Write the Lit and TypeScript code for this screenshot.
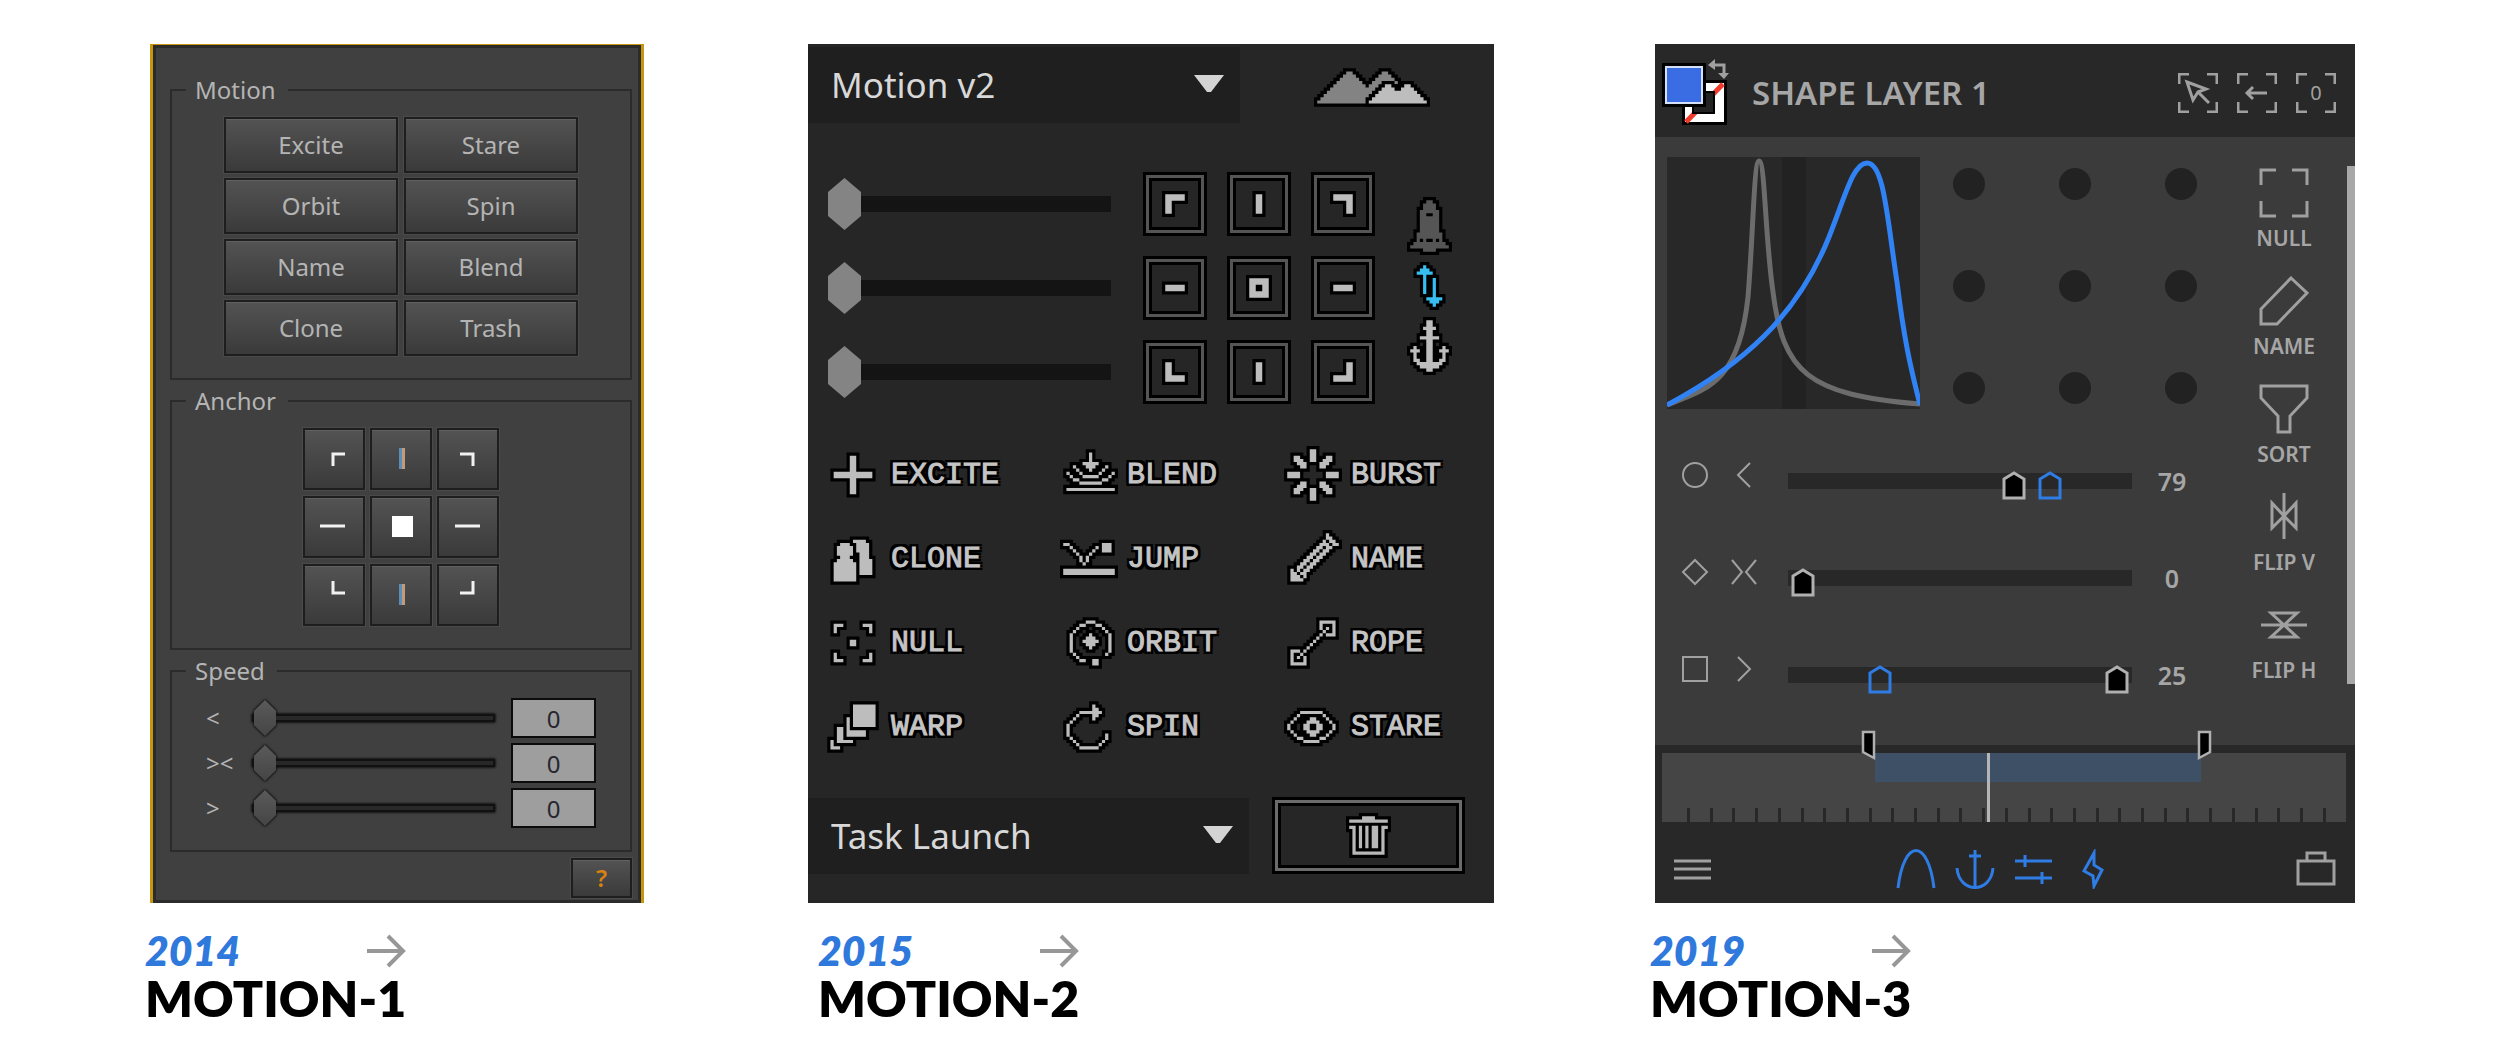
import { LitElement, html, svg, css, nothing } from "lit";
import { customElement } from "lit/decorators.js";

/* ---------- Pixel sprites: space separated "x,y[,w[,h]]" cells ---------- */

interface Layer {
  cells: string;
  fill: string;
}

const parse = (cells: string) =>
  cells.split(" ").map((c) => {
    const [x, y, w = 1, h = 1] = c.split(",").map(Number);
    return { x, y, w, h };
  });

const toPath = (cells: string, grow = 0) =>
  parse(cells)
    .map(({ x, y, w, h }) => `M${x - grow},${y - grow}h${w + 2 * grow}v${h + 2 * grow}h${-w - 2 * grow}z`)
    .join("");

const sprite = (cls: string, cols: number, rows: number, layers: Layer[], holes = "") => html`
  <svg class="sprite ${cls}" viewBox="0 0 ${cols} ${rows}" aria-hidden="true">
    ${layers.map(
      (l) => svg`<path d=${toPath(l.cells, 1)} fill="#000"/><path d=${toPath(l.cells)} fill=${l.fill}/>`
    )}
    ${holes ? svg`<path d=${toPath(holes)} fill="#000"/>` : nothing}
  </svg>
`;

const LIGHT = "#bdbdbd";

const TOOLS: { name: string; cells: string }[] = [
  { name: "EXCITE", cells: "8,3,2,12 3,8,12,2" },
  {
    name: "BLEND",
    cells:
      "9,2,1,3 7,5,5 8,6,3 9,7 4,6 5,7 6,8 7,9,5 12,8 13,7 14,6 2,8 3,9 4,10,2 6,11,7 13,10,2 15,9 16,8 2,13,15",
  },
  {
    name: "BURST",
    cells:
      "8,1,2,4 8,13,2,4 1,8,4,2 13,8,4,2 3,3,2 3,4,3 4,5,3 5,6,2 13,3,2 12,4,3 11,5,3 11,6,2 3,14,2 3,13,3 4,12,3 5,11,2 13,14,2 12,13,3 11,12,3 11,11,2",
  },
  { name: "CLONE", cells: "9,3,4 10,4,4,3 11,7,3,2 11,9,4,5 5,4,3 4,5,5,3 5,8,3 4,9,5 3,10,7,6" },
  { name: "JUMP", cells: "1,4,2 3,5 4,6 5,7 6,8,1,2 7,10 8,8,1,2 9,7 10,6 11,5 13,4,3,3 1,12,16,2" },
  {
    name: "NAME",
    cells:
      "13,1 13,2,2 14,3,2 15,4,2 12,3 11,4,3 10,5,2 13,5,2 9,6,2 12,6,2 8,7,2 11,7,2 7,8,2 10,8,2 6,9,2 9,9,2 5,10,2 8,10,2 4,11,2 7,11,2 4,12,1 6,12,2 5,13,2 6,14 2,12 2,13,2 2,14,3 2,15,4",
  },
  { name: "NULL", cells: "3,3,3 3,3,1,3 12,3,3 14,3,1,3 3,14,3 3,12,1,3 12,14,3 14,12,1,3 8,8,2,2" },
  {
    name: "ORBIT",
    cells:
      "9,6,1,5 8,7,3,3 7,8,5 8,2,3 6,3,2 11,3,2 5,4 13,4 4,5 14,5 3,6,1,6 15,6,1,6 4,12 5,13 6,14,2 14,12 10,14,2,2",
  },
  {
    name: "ROPE",
    cells:
      "11,2,5 15,2,1,5 13,6,3 11,2,1,3 13,4 12,5 11,6 10,7 9,8 8,9 7,10 6,11 5,12 4,13 2,11,3 2,11,1,5 2,15,5 6,13,1,3",
  },
  { name: "WARP", cells: "9,2,7,7 7,6,1,6 7,10,6,2 4,9,2,5 4,13,5 2,13,1,3 2,15,3" },
  {
    name: "SPIN",
    cells: "2,8,1,4 3,12 4,13 5,14 6,15,6 12,14 13,13 14,11,1,2 3,7 4,6 5,5 6,4,4 10,2,1,5 11,3,1,3 12,4",
  },
  {
    name: "STARE",
    cells:
      "5,4,7 4,5 12,5 3,6 13,6 2,7 14,7 1,8,1,2 15,8,1,2 2,10 14,10 3,11 13,11 4,12,2 11,12,2 6,13,5 8,6,2 7,7,4 6,8,2,2 10,8,2,2 7,10,4 8,11,2",
  },
];

const TILES: { name: string; cells: string }[] = [
  { name: "Top left", cells: "1,1,6,2 1,1,2,6" },
  { name: "Top", cells: "3,1,2,6" },
  { name: "Top right", cells: "1,1,6,2 5,1,2,6" },
  { name: "Left", cells: "1,3,6,2" },
  { name: "Center", cells: "1,1,6,2 1,5,6,2 1,3,2,2 5,3,2,2" },
  { name: "Right", cells: "1,3,6,2" },
  { name: "Bottom left", cells: "1,1,2,6 1,5,6,2" },
  { name: "Bottom", cells: "3,1,2,6" },
  { name: "Bottom right", cells: "5,1,2,6 1,5,6,2" },
];

const MOUNTAINS: Layer[] = [
  {
    fill: "#838383",
    cells:
      "10,1,2 21,1,2 9,2,4 20,2,4 8,3,6 19,3,6 7,4,8 18,4,8 6,5,10 17,5,5 5,6,16 4,7,16 3,8,16 2,9,16 1,10,16",
  },
  { fill: LIGHT, cells: "22,5,2 28,5,2 21,6,4 27,6,4 20,7,12 19,8,14 18,9,16 17,10,18" },
];

const ROCKET = "6,1,2 5,2,4,2 4,4,6,7 3,11,8,3 2,14,10 1,15,12 5,16,4";
const SWAP = "5,1 4,2,3 3,3,5 5,4,1,6 8,5,1,6 6,11,5 7,12,3 8,13";
const ANCHOR =
  "6,1,2,16 5,3,4 4,6,6 2,9,1,5 11,9,1,5 1,10,3 10,10,3 2,13,2 10,13,2 3,14,8 4,15,6";
const TRASH =
  "5,1,4 1,2,12 1,4,2 11,4,2 2,4,1,9 11,4,1,9 2,12,10 4,4,1,7 6,4,1,7 8,4,2,7";

const sharedStyles = css`
  :host {
    display: block;
  }
  * {
    box-sizing: border-box;
  }
  button,
  input,
  select {
    font: inherit;
    color: inherit;
    margin: 0;
    padding: 0;
    border: 0;
    border-radius: 0;
    background: none;
  }
  svg {
    display: block;
    flex: none;
  }
  input[type="range"] {
    appearance: none;
    -webkit-appearance: none;
    display: block;
    width: 100%;
    min-width: 0;
  }
`;

/* ------------------------------ Motion 1 ------------------------------ */

@customElement("motion-one")
export class MotionOne extends LitElement {
  static styles = [
    sharedStyles,
    css`
      .panel {
        height: 100%;
        padding: 30px 9px 4px 17px;
        background: #404040;
        border: 3px solid #c6960f;
        border-width: 1px 3px 0;
        box-shadow: inset 0 0 0 3px #2b2b2b;
        font: 24px/30px "Noto Sans", sans-serif;
        color: #b4b4b4;
        display: flex;
        flex-direction: column;
        gap: 6px;
      }
      .group {
        min-width: 0;
        margin: 0;
        padding: 12px 34px 22px;
        border: 2px solid #2b2b2b;
      }
      .legend {
        margin-left: -20px;
        padding: 0 12px 0 9px;
      }
      .actions {
        display: grid;
        grid-template-columns: 174px 174px;
        grid-auto-rows: 56px;
        gap: 5px 6px;
        justify-content: center;
      }
      .anchors {
        display: grid;
        grid-template-columns: repeat(3, 62px);
        grid-auto-rows: 62px;
        gap: 6px 5px;
        justify-content: center;
      }
      .key {
        display: grid;
        place-items: center;
        border: 2px solid #1e1e1e;
        background: linear-gradient(#535353, #3a3a3a);
        box-shadow: 0 0 0 1px #4a4a4a, inset 0 1px 0 #606060;
      }
      .speeds {
        display: grid;
        grid-template-columns: 46px 1fr 85px;
        grid-auto-rows: 40px;
        row-gap: 5px;
        align-items: center;
      }
      .slider {
        height: 40px;
        padding-right: 16px;
        filter: drop-shadow(0 0 1px #111) drop-shadow(0 0 1px #111);
      }
      .slider::-webkit-slider-runnable-track {
        height: 8px;
        background: #282828;
        border: 2px solid #111;
      }
      .slider::-webkit-slider-thumb {
        -webkit-appearance: none;
        width: 22px;
        height: 36px;
        margin-top: -16px;
        background: linear-gradient(#5a5a5a, #454545);
        clip-path: polygon(50% 0, 100% 30%, 100% 70%, 50% 100%, 0 70%, 0 30%);
      }
      .value {
        width: 100%;
        height: 40px;
        border: 2px solid #0c0c0c;
        background: #9e9e9e;
        color: #26262e;
        text-align: center;
      }
      .help {
        align-self: flex-end;
        width: 61px;
        height: 40px;
        color: #d9820f;
        font-weight: 600;
      }
    `,
  ];

  private glyphs: [string, string][] = [
    ["Top left", "M29,37V25H41"],
    ["Top", "|"],
    ["Top right", "M22,25H35V37"],
    ["Left", "M16,29H41"],
    ["Center", "#"],
    ["Right", "M17,29H42"],
    ["Bottom left", "M29,16V28H41"],
    ["Bottom", "|"],
    ["Bottom right", "M22,28H35V16"],
  ];

  private glyph(shape: string) {
    if (shape === "|")
      return svg`<path d="M28,19h3v21h-3z" fill="#5b8db8"/><path d="M31,19h3v21h-3z" fill="#c39b78"/>`;
    if (shape === "#") return svg`<path d="M21,19h21v21h-21z" fill="#fff"/>`;
    return svg`<path d=${shape} fill="none" stroke="#f2f2f2" stroke-width="3"/>`;
  }

  render() {
    return html`
      <div class="panel">
        <fieldset class="group">
          <legend class="legend">Motion</legend>
          <div class="actions">
            ${["Excite", "Stare", "Orbit", "Spin", "Name", "Blend", "Clone", "Trash"].map(
              (n) => html`<button class="key">${n}</button>`
            )}
          </div>
        </fieldset>
        <fieldset class="group">
          <legend class="legend">Anchor</legend>
          <div class="anchors">
            ${this.glyphs.map(
              ([n, s]) => html`<button class="key" aria-label=${n}>
                <svg width="58" height="58" viewBox="1 1 58 58">${this.glyph(s)}</svg>
              </button>`
            )}
          </div>
        </fieldset>
        <fieldset class="group">
          <legend class="legend">Speed</legend>
          <div class="speeds">
            ${["<", "><", ">"].map(
              (n, i) => html`
                <label for="speed-${i}">${n}</label>
                <input class="slider" id="speed-${i}" type="range" min="0" max="100" .value=${"0"} />
                <input class="value" type="text" aria-label="${n} value" .value=${"0"} />
              `
            )}
          </div>
        </fieldset>
        <button class="key help">?</button>
      </div>
    `;
  }
}

/* ------------------------------ Motion 2 ------------------------------ */

@customElement("motion-two")
export class MotionTwo extends LitElement {
  static styles = [
    sharedStyles,
    css`
      .panel {
        height: 100%;
        padding: 3px 0 29px;
        background: #262626;
        color: #d8d8d8;
      }
      .head {
        display: grid;
        grid-template-columns: 432fr 254fr;
        align-items: center;
      }
      .brand {
        display: flex;
        justify-content: center;
        padding: 4px 0 0 10px;
      }
      .mountains {
        width: 116px;
        height: 39px;
      }
      .drop {
        position: relative;
        height: 76px;
        background: #1f1f1f;
      }
      .select {
        appearance: none;
        -webkit-appearance: none;
        width: 100%;
        height: 100%;
        padding-left: 23px;
        font: 35px/44px "Noto Sans", sans-serif;
      }
      .caret {
        position: absolute;
        right: 16px;
        top: 28px;
        pointer-events: none;
      }
      .controls {
        display: grid;
        grid-template-columns: 1fr 232px 45px;
        column-gap: 32px;
        margin-top: 49px;
        padding: 0 42px 0 20px;
      }
      .sliders {
        display: grid;
        grid-auto-rows: 64px;
        row-gap: 20px;
        align-items: center;
      }
      .slider {
        height: 52px;
      }
      .slider::-webkit-slider-runnable-track {
        height: 16px;
        background: #141414;
      }
      .slider::-webkit-slider-thumb {
        -webkit-appearance: none;
        width: 33px;
        height: 52px;
        margin-top: -18px;
        background: #848484;
        clip-path: polygon(50% 0, 100% 27%, 100% 73%, 50% 100%, 0 73%, 0 27%);
      }
      .tiles {
        display: grid;
        grid-template-columns: repeat(3, 64px);
        grid-auto-rows: 64px;
        gap: 20px;
      }
      .tile {
        display: grid;
        place-items: center;
        border: 3px solid #000;
        box-shadow: inset 0 0 0 3px #555, inset 0 0 0 6px #000;
      }
      .modes {
        display: flex;
        flex-direction: column;
        gap: 7px;
        padding-top: 25px;
      }
      .tall {
        width: 45px;
        height: 58px;
      }
      .short {
        width: 45px;
        height: 48px;
      }
      .dot {
        width: 26px;
        height: 26px;
      }
      .tools {
        display: grid;
        grid-template-columns: 236fr 224fr 210fr;
        row-gap: 26px;
        margin: 42px 0 41px;
        padding-left: 16px;
      }
      .tool {
        display: flex;
        align-items: center;
        gap: 9px;
        font: 30px/34px "Liberation Mono", monospace;
        color: #c4c4c4;
        -webkit-text-stroke: 1px #c4c4c4;
        text-shadow: 3px 0 #000, -3px 0 #000, 0 3px #000, 0 -3px #000, 3px 3px #000, -3px -3px #000,
          3px -3px #000, -3px 3px #000, 0 0 2px #000;
      }
      .icon {
        width: 58px;
        height: 58px;
      }
      .foot {
        display: flex;
        align-items: center;
        gap: 23px;
        padding-right: 29px;
      }
      .foot .drop {
        flex: 1;
      }
      .trash {
        width: 193px;
        height: 77px;
        box-shadow: inset 0 0 0 3px #6b6b6b, inset 0 0 0 6px #000;
      }
      .bin {
        width: 45px;
        height: 45px;
      }
    `,
  ];

  private drop(id: string, label: string, text: string) {
    return html`
      <div class="drop">
        <select class="select" id=${id} aria-label=${label}>
          <option>${text}</option>
        </select>
        <svg class="caret" width="30" height="17" viewBox="0 0 30 17">
          <path d="M0,0H30L17,17H13z" fill="#d4d4d4" />
        </svg>
      </div>
    `;
  }

  render() {
    return html`
      <div class="panel">
        <div class="head">
          ${this.drop("script", "Script", "Motion v2")}
          <div class="brand">${sprite("mountains", 36, 12, MOUNTAINS)}</div>
        </div>
        <div class="controls">
          <div class="sliders">
            ${["Ease in", "Ease both", "Ease out"].map(
              (n) =>
                html`<input class="slider" type="range" aria-label=${n} min="0" max="100" .value=${"0"} />`
            )}
          </div>
          <div class="tiles">
            ${TILES.map(
              (t) => html`<button class="tile" aria-label=${t.name}>
                ${sprite("dot", 8, 8, [{ cells: t.cells, fill: LIGHT }])}
              </button>`
            )}
          </div>
          <div class="modes">
            <button aria-label="Launch">
              ${sprite("tall", 14, 18, [{ cells: ROCKET, fill: "#555" }], "6,5,2 4,13 6,13,2 9,13")}
            </button>
            <button aria-label="Swap">${sprite("short", 14, 15, [{ cells: SWAP, fill: "#38bdf0" }])}</button>
            <button aria-label="Anchor">${sprite("tall", 14, 18, [{ cells: ANCHOR, fill: LIGHT }])}</button>
          </div>
        </div>
        <div class="tools">
          ${TOOLS.map(
            (t) => html`<button class="tool">
              ${sprite("icon", 18, 18, [{ cells: t.cells, fill: LIGHT }])}<span>${t.name}</span>
            </button>`
          )}
        </div>
        <div class="foot">
          ${this.drop("task", "Task", "Task Launch")}
          <button class="tile trash" aria-label="Trash">
            ${sprite("bin", 14, 14, [{ cells: TRASH, fill: "#b8b8b8" }])}
          </button>
        </div>
      </div>
    `;
  }
}

/* ------------------------------ Motion 3 ------------------------------ */

interface Ease {
  name: string;
  shape: string;
  chevron: string;
  value: number;
  handles: { at: number; active: boolean }[];
}

@customElement("motion-three")
export class MotionThree extends LitElement {
  static styles = [
    sharedStyles,
    css`
      .panel {
        height: 100%;
        background: #282828;
        color: #a6a6a6;
        font: 600 21px/28px "Noto Sans", sans-serif;
        display: flex;
        flex-direction: column;
      }
      .line {
        fill: none;
        stroke: #a0a0a0;
        stroke-width: 3;
      }
      .thin {
        stroke-width: 2;
      }
      .blue {
        stroke: #2f7ce4;
      }
      .head {
        display: flex;
        align-items: center;
        gap: 19px;
        height: 93px;
        padding: 0 19px 0 7px;
      }
      .title {
        flex: 1;
        margin: 0;
        padding: 4px 0 0 3px;
        font: 600 33px/40px "Noto Sans", sans-serif;
      }
      .head button {
        padding-top: 4px;
      }
      .glyph {
        fill: #a0a0a0;
        font: 20px "Noto Sans", sans-serif;
      }
      .body {
        flex: 1;
        display: flex;
        background: #3b3b3b;
      }
      .main {
        flex: 1;
        padding-top: 20px;
      }
      .top {
        display: flex;
        gap: 33px;
        padding-left: 12px;
      }
      .dots {
        display: grid;
        grid-template-columns: repeat(3, 32px);
        grid-auto-rows: 32px;
        gap: 70px 74px;
        padding-top: 11px;
      }
      .dot {
        border-radius: 50%;
        background: #222;
      }
      .ease {
        display: grid;
        grid-template-columns: 28px 28px 1fr 60px;
        align-items: center;
        height: 97px;
        padding: 0 32px 0 26px;
      }
      .eases {
        padding-top: 23px;
      }
      .mark {
        padding-bottom: 12px;
      }
      .mark + .mark {
        padding-left: 21px;
      }
      .track {
        position: relative;
        height: 16px;
        margin: 0 10px 0 51px;
        background: #282828;
      }
      .range {
        position: absolute;
        inset: 0;
        height: 16px;
        opacity: 0;
      }
      .handle {
        position: absolute;
        top: -3px;
      }
      .value {
        font: 600 25px/32px "Noto Sans", sans-serif;
        text-align: center;
      }
      .tools {
        width: 100px;
        display: flex;
        flex-direction: column;
        gap: 24px;
        padding-top: 31px;
      }
      .tool {
        display: flex;
        flex-direction: column;
        align-items: center;
        gap: 6px;
      }
      .scroll {
        width: 8px;
        margin: 29px 0 61px 13px;
        background: #a8a8a8;
      }
      .time {
        position: relative;
        width: 100%;
        height: auto;
        margin-top: -15px;
      }
      .foot {
        display: flex;
        justify-content: space-between;
        padding: 27px 19px 14px 18px;
      }
      .tabs {
        display: flex;
        gap: 19px;
      }
    `,
  ];

  private eases: Ease[] = [
    {
      name: "Ease in",
      shape: "M14,2a12,12 0 1 1 0,24a12,12 0 1 1 0,-24z",
      chevron: "M20,2L8,14L20,26",
      value: 79,
      handles: [
        { at: 67, active: false },
        { at: 78, active: true },
      ],
    },
    {
      name: "Ease both",
      shape: "M14,2L26,14L14,26L2,14z",
      chevron: "M2,2L12,14L2,26M26,2L16,14L26,26",
      value: 0,
      handles: [{ at: 1, active: false }],
    },
    {
      name: "Ease out",
      shape: "M2,2H26V26H2z",
      chevron: "M8,2L20,14L8,26",
      value: 25,
      handles: [
        { at: 25, active: true },
        { at: 99, active: false },
      ],
    },
  ];

  private tools = [
    { name: "NULL", d: "M2,17V2H17M33,2H48V17M2,33V48H17M33,48H48V33" },
    { name: "NAME", d: "M32,2L48,17L18,48H2V33z" },
    { name: "SORT", d: "M2,2H48V14L31,32V48H19V32L2,14z" },
    { name: "FLIP V", d: "M25,1V47M13,11L25,24L13,36zM37,11L25,24L37,36z" },
    { name: "FLIP H", d: "M2,25H48M12,13H38L25,25zM12,37H38L25,25z" },
  ];

  private frame = "M1,11V1H11M29,1H39V11M1,29V39H11M29,39H39V29";

  private icon(size: number, d: string, cls = "line") {
    return html`<svg width=${size} height=${size} viewBox="0 0 ${size} ${size}"><path class=${cls} d=${d} /></svg>`;
  }

  private easeRow(e: Ease, i: number) {
    return html`
      <div class="ease">
        <span class="mark">${this.icon(28, e.shape, "line thin")}</span>
        <span class="mark">${this.icon(28, e.chevron, "line thin")}</span>
        <div class="track">
          ${e.handles.map(
            (h) => html`<svg class="handle" style="left: calc((100% - 24px) * ${h.at / 100})" width="24" height="30">
              <path
                d="M2,9L12,3L22,9V28H2z"
                fill=${h.active ? "none" : "#000"}
                stroke=${h.active ? "#2f7ce4" : "#b0b0b0"}
                stroke-width="3"
              />
            </svg>`
          )}
          <input class="range" id="ease-${i}" type="range" min="0" max="100" aria-label=${e.name} .value=${String(e.value)} />
        </div>
        <output class="value" for="ease-${i}">${e.value}</output>
      </div>
    `;
  }

  render() {
    const ticks = Array.from({ length: 29 }, (_, i) => 32 + Math.round(i * 22.7));
    return html`
      <div class="panel">
        <header class="head">
          <svg width="68" height="68" viewBox="0 0 68 68">
            <rect x="20" y="23" width="45" height="45" fill="#000" />
            <rect x="23" y="26" width="39" height="39" fill="#fff" />
            <path d="M24,65L61,27" stroke="#f03a2c" stroke-width="5" />
            <rect x="31" y="35" width="21" height="21" fill="#222" stroke="#000" stroke-width="2" />
            <rect x="0" y="6" width="44" height="44" fill="#000" />
            <rect x="3" y="9" width="38" height="38" fill="#d5dff5" />
            <rect x="5" y="11" width="34" height="34" fill="#3a6de4" />
            <path class="line" d="M49,8H62V19" />
            <path d="M46,8L53,2V13zM62,22L56,16H67z" fill="#a0a0a0" />
          </svg>
          <h2 class="title">SHAPE LAYER 1</h2>
          <button aria-label="Select">${this.icon(40, this.frame + "M9,9L28,16L20,19L15,27zM19,18L31,30")}</button>
          <button aria-label="Back">${this.icon(40, this.frame + "M30,20H11M16,14L10,20L16,26")}</button>
          <button aria-label="Zero">
            <svg width="40" height="40" viewBox="0 0 40 40">
              <path class="line" d=${this.frame} />
              <text class="glyph" x="20" y="27" text-anchor="middle">0</text>
            </svg>
          </button>
        </header>
        <div class="body">
          <div class="main">
            <div class="top">
              <svg width="253" height="252" viewBox="0 0 253 252">
                <rect width="253" height="252" fill="#282828" />
                <rect x="115" width="24" height="252" fill="#222" />
                <g fill="none" stroke-width="5">
                  <path
                    d="M0,248C40,232 72,226 81,140C86,80 87,4 92,4C98,4 98,80 106,135C116,215 140,238 253,247"
                    stroke="#6c6c6c"
                  />
                  <path
                    d="M0,248C75,208 130,160 162,80C178,40 186,6 200,6C217,6 220,60 230,125C238,190 245,215 253,248"
                    stroke="#3183f5"
                  />
                </g>
              </svg>
              <div class="dots">
                ${TILES.map((t) => html`<button class="dot" aria-label=${t.name}></button>`)}
              </div>
            </div>
            <div class="eases">${this.eases.map((e, i) => this.easeRow(e, i))}</div>
          </div>
          <div class="tools">
            ${this.tools.map(
              (t) => html`<button class="tool">${this.icon(50, t.d)}<span>${t.name}</span></button>`
            )}
          </div>
          <div class="scroll"></div>
        </div>
        <svg class="time" viewBox="0 0 700 92">
          <rect x="7" y="23" width="684" height="69" fill="#454545" />
          <rect x="220" y="23" width="326" height="29" fill="#3d5066" />
          ${ticks.map((x) => svg`<rect x=${x} y="78" width="3" height="14" fill="#282828"/>`)}
          <rect x="332" y="23" width="3" height="69" fill="#b5b5b5" />
          <g fill="#000" stroke="#b0b0b0" stroke-width="2.5">
            <path d="M208,2H219V28L208,22z" />
            <path d="M544,2H555V22L544,28z" />
          </g>
        </svg>
        <footer class="foot">
          <button aria-label="Menu">${this.icon(40, "M1,12H38M1,20H38M1,29H38")}</button>
          <div class="tabs">
            <button aria-label="Curve">${this.icon(40, "M2,39C8,-11 32,-11 38,39", "line blue")}</button>
            <button aria-label="Anchor">
              ${this.icon(40, "M20,1V39M14,7H26M2,19C4,45 36,45 38,19", "line blue")}
            </button>
            <button aria-label="Sliders">${this.icon(40, "M1,12H38M11,6V18M1,29H38M28,23V35", "line blue")}</button>
            <button aria-label="Actions">
              ${this.icon(40, "M21,4L11,22L20,27L21,37L29,21L21,16z", "line blue")}
            </button>
          </div>
          <button aria-label="Toolbox">${this.icon(40, "M2,12H38V35H2zM11,12V4H29V12")}</button>
        </footer>
      </div>
    `;
  }
}

/* -------------------------------- Page -------------------------------- */

@customElement("app-root")
export class AppRoot extends LitElement {
  static styles = css`
    :host {
      display: block;
      background: #fff;
    }
    .page {
      display: grid;
      grid-template-columns: 494fr 164fr 686fr 161fr 700fr;
      grid-template-rows: minmax(859px, auto) auto;
      padding: 44px 145px 40px 150px;
    }
    .card {
      display: grid;
      grid-row: span 2;
      grid-template-rows: subgrid;
    }
    .card:nth-child(2) {
      grid-column: 3;
    }
    .card:nth-child(3) {
      grid-column: 5;
    }
    .caption {
      justify-self: start;
      margin: 26px 0 0 -5px;
      font-family: Lato, sans-serif;
    }
    .inset {
      margin-left: 10px;
    }
    .when {
      display: flex;
      align-items: center;
      justify-content: space-between;
      font-size: 41px;
      line-height: 44px;
      font-style: italic;
      font-weight: 800;
      color: #3079dc;
    }
    .name {
      margin: 0;
      font-size: 50px;
      line-height: 50px;
      font-weight: 800;
      color: #000;
    }
    svg {
      display: block;
    }
  `;

  private card(panel: unknown, year: string, name: string, inset = false) {
    return html`
      <section class="card">
        ${panel}
        <div class="caption ${inset ? "inset" : ""}">
          <div class="when">
            <time datetime=${year}>${year}</time>
            <svg width="40" height="34" viewBox="0 0 40 34" aria-hidden="true">
              <path d="M1,17H37M22,2L37,17L22,32" fill="none" stroke="#979797" stroke-width="4" />
            </svg>
          </div>
          <h1 class="name">${name}</h1>
        </div>
      </section>
    `;
  }

  render() {
    return html`
      <main class="page">
        ${this.card(html`<motion-one></motion-one>`, "2014", "MOTION-1")}
        ${this.card(html`<motion-two></motion-two>`, "2015", "MOTION-2", true)}
        ${this.card(html`<motion-three></motion-three>`, "2019", "MOTION-3")}
      </main>
    `;
  }
}
